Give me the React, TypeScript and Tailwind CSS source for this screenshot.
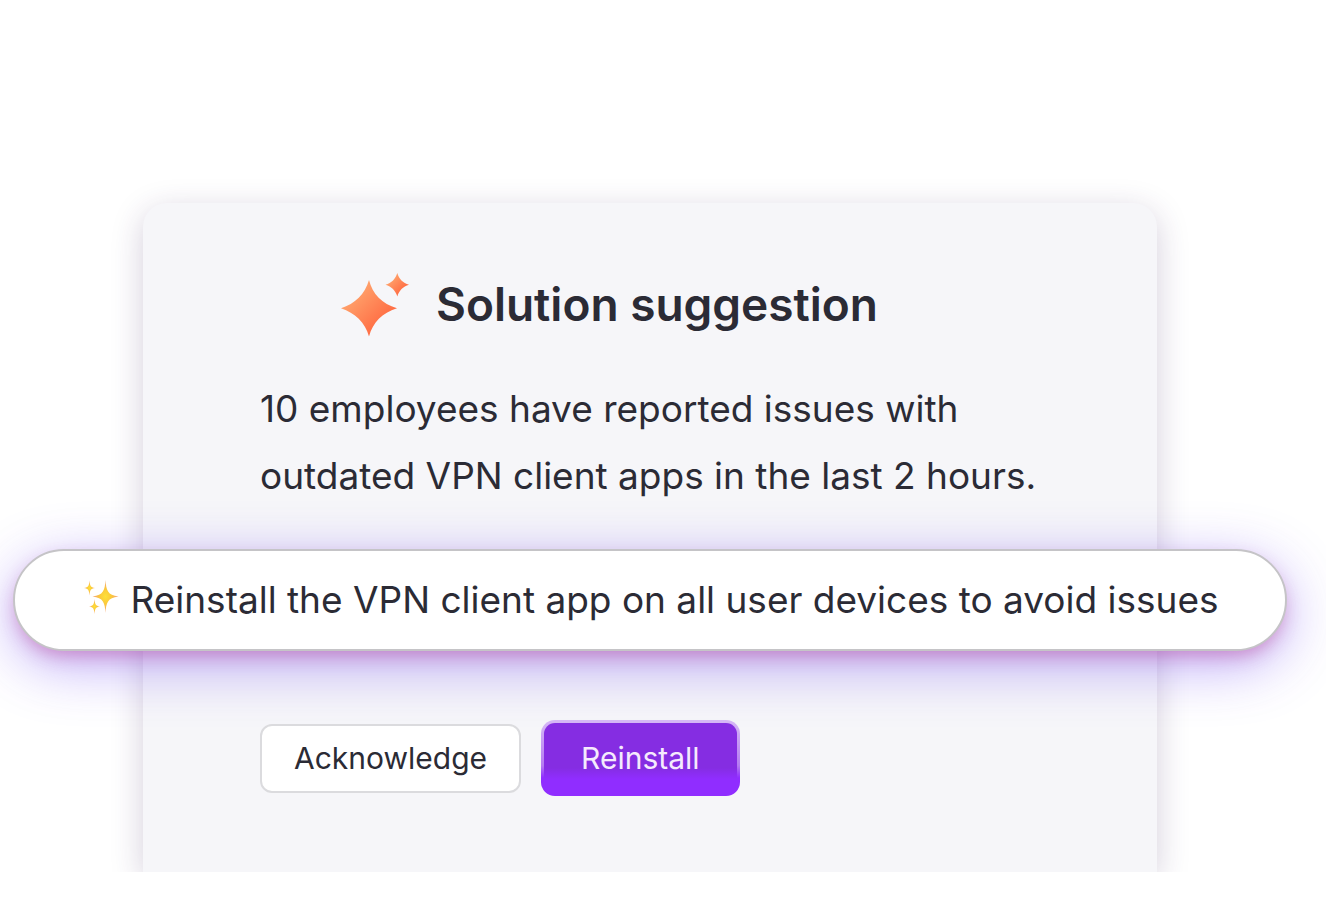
import React from "react";

function SparkleMark() {
  return (
    <svg viewBox="0 0 70 64" className="h-16 w-[70px] shrink-0" aria-hidden="true">
      <defs>
        <linearGradient id="mark-large" x1="0.2" y1="0.2" x2="0.8" y2="0.8">
          <stop offset="0" stopColor="#ffa56e" />
          <stop offset="1" stopColor="#ff6840" />
        </linearGradient>
      </defs>
      <path
        fill="url(#mark-large)"
        d="M29 7C32.5 21 42 31 57 35.200C42 40 33 49 29 63.500C25 49 15 40 1 35.200C15 31 25 21 29 7Z"
      />
      <path
        fill="url(#mark-large)"
        d="M57.300 0C58.800 5.800 63 10 69 11.700C63 13.500 59 17.500 57.300 23.400C55.600 17.500 51.500 13.500 45.500 11.700C51.500 10 55.600 5.800 57.300 0Z"
      />
    </svg>
  );
}

function GoldSparkles() {
  return (
    <svg viewBox="0 0 36 42" className="h-[42px] w-9 shrink-0" aria-hidden="true">
      <defs>
        <radialGradient id="gold">
          <stop offset="0" stopColor="#fde038" />
          <stop offset="0.45" stopColor="#fbc93c" />
          <stop offset="1" stopColor="#f2a07a" />
        </radialGradient>
      </defs>
      <g fill="url(#gold)">
        <path d="M22.500 1C23.200 11 24.500 16.300 35.500 17.500C24.500 18.700 23.200 24 22.500 34C21.800 24 20.500 18.700 9.500 17.500C20.500 16.300 21.800 11 22.500 1Z" />
        <path d="M6.500 1.500C7 6.500 7.500 8.500 12 9C7.500 9.500 7 11.500 6.500 16.500C6 11.500 5.500 9.500 1 9C5.500 8.500 6 6.500 6.500 1.500Z" />
        <path d="M11.500 20C12 25 12.500 27 17 27.500C12.500 28 12 30 11.500 35C11 30 10.500 28 6 27.500C10.500 27 11 25 11.500 20Z" />
      </g>
    </svg>
  );
}

export default function App() {
  return (
    <main className="overflow-hidden bg-white pt-[203px] pr-[169px] pl-[143px] font-['Inter',sans-serif] text-[#2b2b35]">
      <section className="rounded-t-3xl bg-[#f6f6f9] pt-[70px] pb-[76px] shadow-[0_8px_32px_rgba(58,30,90,0.22)]">
        <header className="flex items-start justify-center gap-[26px] pr-[82px]">
          <SparkleMark />
          <h1 className="text-[46px] leading-[62px] font-semibold">Solution suggestion</h1>
        </header>
        <p className="mt-[38px] px-[117px] text-[37px] leading-[67px]">
          10 employees have reported issues with
          <br />
          <span className="whitespace-nowrap">outdated VPN client apps in the last 2 hours.</span>
        </p>
        <div className="-mx-[130px] mt-10 flex items-center justify-center gap-[11px] rounded-full border-2 border-[#c5c4c7] bg-white py-4 pl-0.5 text-[37px] leading-[66px] whitespace-nowrap shadow-[0_8px_18px_-4px_rgba(190,60,140,0.45),0_14px_56px_rgba(92,50,240,0.42)]">
          <GoldSparkles />
          <p>Reinstall the VPN client app on all user devices to avoid issues</p>
        </div>
        <div className="mt-[69px] flex items-center gap-5 px-[117px]">
          <button
            type="button"
            className="h-[69px] rounded-xl border-2 border-[#dbdbde] bg-white px-8 text-[30px] leading-9"
          >
            Acknowledge
          </button>
          <button
            type="button"
            className="h-[76px] rounded-[14px] border-3 border-transparent px-[37px] text-[30px] leading-9 text-[#f5eafd] [background:linear-gradient(#852de2_64%,#902dff_80%)_padding-box,linear-gradient(#d6b8f6,#b57bf2_60%,#902dff_76%)_border-box]"
          >
            Reinstall
          </button>
        </div>
      </section>
    </main>
  );
}
